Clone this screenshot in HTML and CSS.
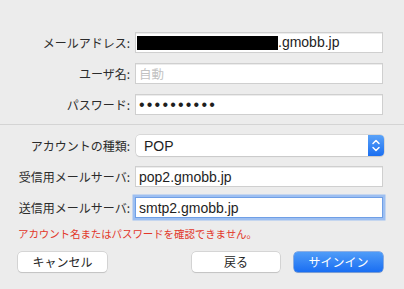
FILE: index.html
```
<!DOCTYPE html>
<html lang="ja">
<head>
    <meta charset="UTF-8">
    <title>アカウントを追加</title>
    <link rel="stylesheet" href="styles.css">
</head>
<body>

<div class="dialog">
    <div class="form-grid top">
        <label for="email">メールアドレス:</label>
        <div class="field" id="email"><span class="redact"></span>.gmobb.jp</div>

        <label for="user">ユーザ名:</label>
        <input class="field" type="text" id="user" placeholder="自動">

        <label for="pass">パスワード:</label>
        <input class="field pass" type="password" id="pass" value="xxxxxxxxxx">
    </div>

    <hr class="divider">

    <div class="form-grid">
        <label>アカウントの種類:</label>
        <div class="select">
            <span class="select-value">POP</span>
            <span class="stepper">
                <svg width="16" height="21" viewBox="0 0 16 21">
                    <path d="M5 8.5 L8 5.5 L11 8.5" fill="none" stroke="#fff" stroke-width="1.5" stroke-linecap="round" stroke-linejoin="round"/>
                    <path d="M5 12.5 L8 15.5 L11 12.5" fill="none" stroke="#fff" stroke-width="1.5" stroke-linecap="round" stroke-linejoin="round"/>
                </svg>
            </span>
        </div>

        <label for="pop">受信用メールサーバ:</label>
        <input class="field" type="text" id="pop" value="pop2.gmobb.jp">

        <label for="smtp">送信用メールサーバ:</label>
        <input class="field focused" type="text" id="smtp" value="smtp2.gmobb.jp">
    </div>

    <p class="error">アカウント名またはパスワードを確認できません。</p>

    <div class="button-row">
        <button type="button" class="btn">キャンセル</button>
        <button type="button" class="btn back">戻る</button>
        <button type="button" class="btn primary">サインイン</button>
    </div>
</div>

</body>
</html>
```

FILE: styles.css
```
body {
    margin: 0;
    padding: 0;
    background: #ececec;
    font-family: "Noto Sans CJK JP", "Liberation Sans", sans-serif;
    color: #262626;
}
.dialog {
    width: 404px;
    height: 289px;
    overflow: hidden;
}
.form-grid {
    display: grid;
    grid-template-columns: 130px 248px;
    grid-auto-rows: 21px;
    column-gap: 5px;
    row-gap: 10px;
    padding-top: 10px;
}
.form-grid.top {
    padding-top: 32px;
}
label {
    align-self: center;
    text-align: right;
    font-size: 12px;
    line-height: 16px;
    white-space: nowrap;
    color: #2b2b2b;
}
.field {
    box-sizing: border-box;
    width: 248px;
    height: 21px;
    margin: 0;
    padding: 0 3px;
    border: 1px solid #cfcfcf;
    border-radius: 0;
    background: #fff;
    box-shadow: inset 0 1px 0 #ececec;
    font-family: "Liberation Sans", "Noto Sans CJK JP", sans-serif;
    font-size: 14px;
    line-height: 19px;
    color: #1e1e1e;
    outline: none;
    display: flex;
    align-items: center;
}
.field::placeholder {
    color: #c2c2c2;
    font-family: "Noto Sans CJK JP", sans-serif;
    font-size: 12.5px;
}
.redact {
    display: inline-block;
    width: 141px;
    height: 14px;
    margin-left: -2px;
    background: #000;
}
.pass {
    letter-spacing: 2.2px;
    font-size: 16px;
}
.focused {
    border-color: #6f9fe6;
    box-shadow: 0 0 0 2.5px #9dbff1;
}
.divider {
    margin: 9px 0 0;
    border: none;
    border-top: 1px solid #d4d4d4;
}
.select {
    box-sizing: border-box;
    width: 248px;
    height: 21px;
    margin-left: 1px;
    display: flex;
    align-items: center;
    background: #fff;
    border-radius: 4px;
    box-shadow: 0 0 0 0.5px #c4c4c4, 0 1px 1px rgba(0,0,0,0.12);
    overflow: hidden;
}
.select-value {
    flex: 1;
    padding-left: 8px;
    font-family: "Liberation Sans", sans-serif;
    font-size: 14px;
    color: #1e1e1e;
}
.stepper {
    width: 16px;
    height: 21px;
    background: linear-gradient(#5aa2f8, #1b6ff1);
}
.stepper svg {
    display: block;
}
.error {
    margin: 9px 0 0 18px;
    font-size: 10.5px;
    line-height: 14px;
    color: #e2372a;
    letter-spacing: -0.1px;
}
.button-row {
    display: flex;
    margin-top: 11px;
    padding: 0 21px 0 18px;
}
.btn {
    box-sizing: border-box;
    width: 89px;
    height: 20px;
    margin: 0;
    padding: 0;
    border: none;
    border-radius: 4px;
    background: #fff;
    box-shadow: 0 0 0 0.5px #bdbdbd, 0 1px 1px rgba(0,0,0,0.15);
    font-family: "Noto Sans CJK JP", sans-serif;
    font-size: 12px;
    line-height: 20px;
    color: #262626;
    cursor: pointer;
}
.back {
    width: 88px;
    margin-left: auto;
}
.primary {
    margin-left: 14px;
    background: linear-gradient(#4f9cf8, #1a6ef2);
    box-shadow: 0 0 0 0.5px #2a6fd8, 0 1px 1px rgba(0,0,0,0.15);
    color: #fff;
}
```
